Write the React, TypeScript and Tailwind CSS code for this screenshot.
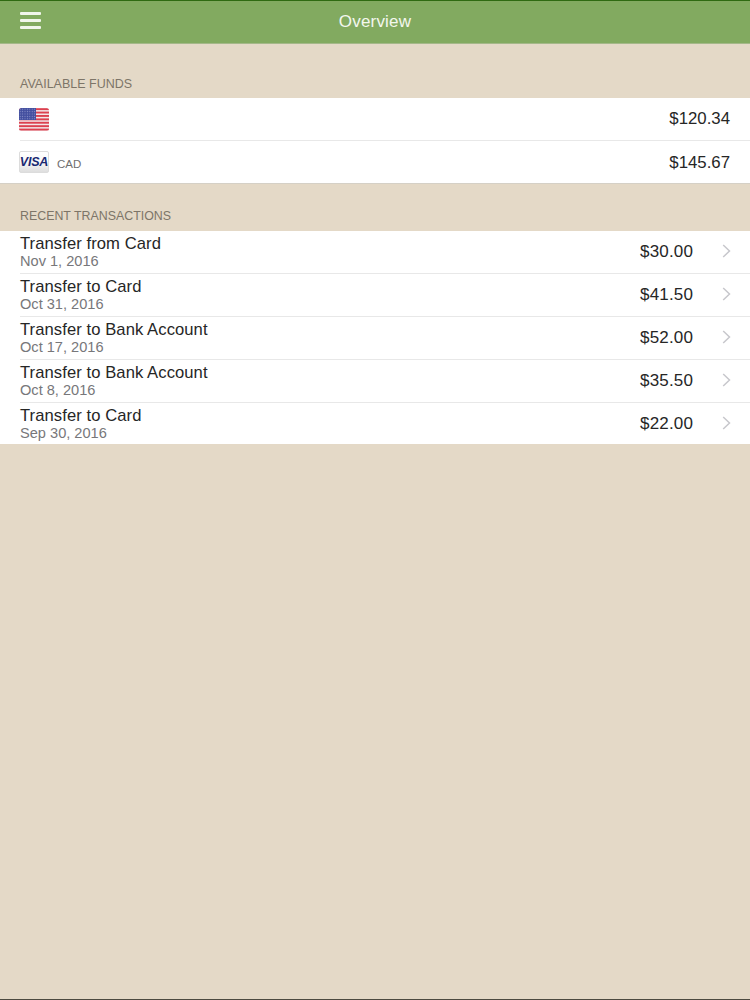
import React from "react";

const txs = [
  { t: "Transfer from Card", d: "Nov 1, 2016", a: "$30.00" },
  { t: "Transfer to Card", d: "Oct 31, 2016", a: "$41.50" },
  { t: "Transfer to Bank Account", d: "Oct 17, 2016", a: "$52.00" },
  { t: "Transfer to Bank Account", d: "Oct 8, 2016", a: "$35.50" },
  { t: "Transfer to Card", d: "Sep 30, 2016", a: "$22.00" },
];

function Flag() {
  const stripes = [0, 1, 2, 3, 4, 5, 6];
  return (
    <svg width="30" height="23" viewBox="0 0 30 23" className="block">
      <defs>
        <clipPath id="fc">
          <rect x="0" y="0" width="30" height="23" rx="2.5" />
        </clipPath>
        <pattern id="stars" width="2.4" height="2.4" patternUnits="userSpaceOnUse">
          <rect width="2.4" height="2.4" fill="#434f9f" />
          <circle cx="1.2" cy="1.2" r="0.55" fill="#8f95cc" />
        </pattern>
      </defs>
      <g clipPath="url(#fc)">
        <rect width="30" height="23" fill="#f2e6e8" />
        {stripes.map((i) => (
          <rect key={i} x="0" y={i * 3.4 + 0.2} width="30" height="1.9" fill="#dc4150" />
        ))}
        <rect x="0" y="0" width="17" height="12" fill="url(#stars)" />
      </g>
    </svg>
  );
}

function Visa() {
  return (
    <div className="w-[30px] h-[22px] rounded-[2px] border border-[#dcdcdc] bg-gradient-to-b from-white via-[#f8f8f8] to-[#dedede] flex items-start justify-center pt-[4px]">
      <span className="text-[12.5px] leading-[12px] font-bold italic text-[#1a2a72] tracking-[-0.2px]">VISA</span>
    </div>
  );
}

function Chevron() {
  return (
    <svg width="9" height="14" viewBox="0 0 9 14" fill="none" className="block -mt-[2px]">
      <path d="M1.2 1 L7.5 7 L1.2 13" stroke="#c7c7cc" strokeWidth="1.5" />
    </svg>
  );
}

export default function App() {
  return (
    <div className="w-[750px] h-[1000px] bg-[#e4d9c7] flex flex-col overflow-hidden font-['Liberation_Sans',Arial,sans-serif]">
      <header className="h-[44px] bg-[#82aa60] border-t border-t-[#2f6a12] border-b border-b-[#a4b889] flex items-center relative shrink-0">
        <div className="ml-[20px] w-[21px] flex flex-col gap-[4px] mb-[3px]">
          <div className="h-[3px] bg-[#f1f6ec] rounded-[1px]" />
          <div className="h-[3px] bg-[#f1f6ec] rounded-[1px]" />
          <div className="h-[3px] bg-[#f1f6ec] rounded-[1px]" />
        </div>
        <div className="absolute inset-x-0 top-[11px] text-center text-[17px] leading-[19px] tracking-[0.2px] text-[#f3f7ee]">Overview</div>
      </header>

      <div className="h-[54px] flex items-end pb-[6px] pl-[20px] text-[12.5px] leading-[15px] text-[#7d7568]">AVAILABLE FUNDS</div>

      <section className="bg-white border-b border-[#d5d0c6]">
        <div className="h-[43px] flex items-center pl-[19px] pr-[20px] justify-between">
          <Flag />
          <span className="text-[16.8px] text-[#262626] -mt-[1px]">$120.34</span>
        </div>
        <div className="ml-[20px] h-px bg-[#e8e8e8] -mt-[1px]" />
        <div className="h-[42px] flex items-center pl-[19px] pr-[20px] justify-between">
          <div className="flex items-center gap-[8px]">
            <Visa />
            <span className="text-[11.5px] text-[#6f6f6f] mt-[5px]">CAD</span>
          </div>
          <span className="text-[16.8px] text-[#262626] mt-[1px]">$145.67</span>
        </div>
      </section>

      <div className="h-[47px] flex items-end pb-[7px] pl-[20px] text-[12.4px] leading-[15px] text-[#7d7568]">RECENT TRANSACTIONS</div>

      <section className="bg-white">
        {txs.map((x, i) => (
          <div key={i} className={"pl-[20px] flex flex-col " + (i < 4 ? "h-[43px]" : "h-[41px]")}>
            <div className={"flex-1 flex items-center pr-[19px] " + (i < 4 ? "border-b border-[#e8e8e8]" : "")}>
              <div className="flex-1 min-w-0">
                <div className="text-[16.6px] leading-[19px] tracking-[0.08px] text-[#262626]">{x.t}</div>
                <div className="text-[14.6px] leading-[17px] text-[#77777a]">{x.d}</div>
              </div>
              <span className="text-[17px] tracking-[0.15px] text-[#262626] mr-[29px]">{x.a}</span>
              <Chevron />
            </div>
          </div>
        ))}
      </section>

      <div className="flex-1" />
      <div className="h-px bg-[#4c4a40] shrink-0" />
    </div>
  );
}
